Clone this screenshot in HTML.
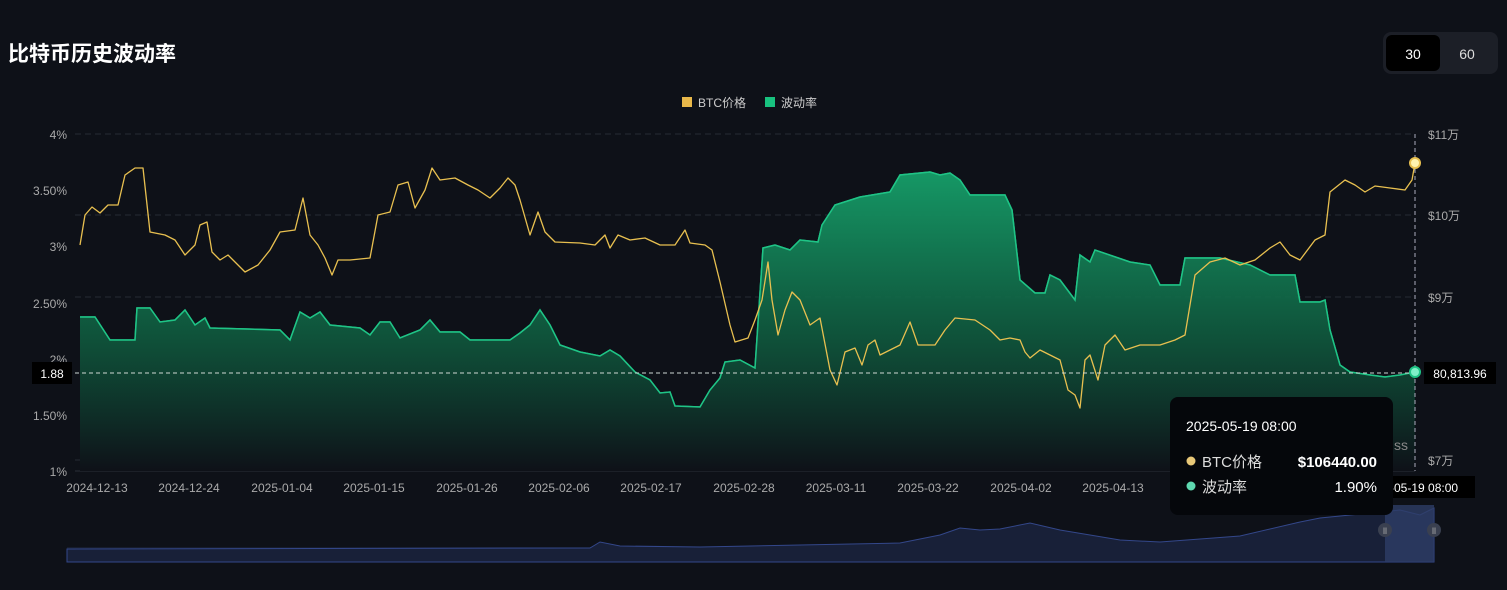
<!DOCTYPE html>
<html><head><meta charset="utf-8"><style>
body{margin:0;background:#0e1118;width:1507px;height:590px;overflow:hidden;font-family:"Liberation Sans","Noto Sans CJK SC",sans-serif;}
</style></head><body>
<svg width="1507" height="590" xmlns="http://www.w3.org/2000/svg" style="position:absolute;left:0;top:0;font-family:'Liberation Sans','Noto Sans CJK SC',sans-serif">
<defs>
<linearGradient id="g" x1="0" y1="0" x2="0" y2="1" gradientUnits="userSpaceOnUse" y1v="0">
</linearGradient>
<linearGradient id="gf" gradientUnits="userSpaceOnUse" x1="0" y1="170" x2="0" y2="471">
<stop offset="0" stop-color="#16a06a" stop-opacity="0.95"/>
<stop offset="0.55" stop-color="#0f5a3e" stop-opacity="0.9"/>
<stop offset="1" stop-color="#0e1118" stop-opacity="1"/>
</linearGradient>
<linearGradient id="nv" x1="0" y1="0" x2="0" y2="1">
<stop offset="0" stop-color="#2a3a6a"/><stop offset="1" stop-color="#151c30"/>
</linearGradient>
</defs>
<text x="8" y="61" fill="#fff" font-size="21" font-weight="bold">比特币历史波动率</text>
<rect x="1383" y="32" width="115" height="42" rx="8" fill="#1c1f27"/>
<rect x="1386" y="35" width="54" height="36" rx="6" fill="#000"/>
<text x="1413" y="59" fill="#fff" font-size="14" text-anchor="middle">30</text>
<text x="1467" y="59" fill="#ddd" font-size="14" text-anchor="middle">60</text>
<rect x="682" y="97" width="10" height="10" fill="#e8b84a"/>
<text x="698" y="107" fill="#ccc" font-size="12">BTC价格</text>
<rect x="765" y="97" width="10" height="10" fill="#18c27f"/>
<text x="781" y="107" fill="#ccc" font-size="12">波动率</text>
<g stroke="#262a33" stroke-dasharray="6 4" stroke-width="1">
<line x1="75" y1="134" x2="1415" y2="134"/><line x1="75" y1="215" x2="1415" y2="215"/>
<line x1="75" y1="297" x2="1415" y2="297"/><line x1="75" y1="460" x2="1415" y2="460"/>
</g>
<line x1="75" y1="471" x2="1415" y2="471" stroke="#2a2e38"/>
<g fill="#aaa" font-size="12" text-anchor="end">
<text x="67" y="139">4%</text><text x="67" y="195">3.50%</text><text x="67" y="251">3%</text>
<text x="67" y="308">2.50%</text><text x="67" y="364">2%</text><text x="67" y="420">1.50%</text><text x="67" y="476">1%</text>
</g>
<g fill="#aaa" font-size="12">
<text x="1428" y="139">$11万</text><text x="1428" y="220">$10万</text><text x="1428" y="302">$9万</text><text x="1428" y="465">$7万</text>
</g>
<g fill="#aaa" font-size="12" text-anchor="middle">
<text x="97" y="492">2024-12-13</text><text x="189" y="492">2024-12-24</text><text x="282" y="492">2025-01-04</text>
<text x="374" y="492">2025-01-15</text><text x="467" y="492">2025-01-26</text><text x="559" y="492">2025-02-06</text>
<text x="651" y="492">2025-02-17</text><text x="744" y="492">2025-02-28</text><text x="836" y="492">2025-03-11</text>
<text x="928" y="492">2025-03-22</text><text x="1021" y="492">2025-04-02</text><text x="1113" y="492">2025-04-13</text>
</g>
<path id="vol" d="M80,317 L95,317 L110,340 L135,340 L137,308 L150,308 L160,322 L175,320 L185,310 L195,325 L205,318 L210,328 L280,330 L290,340 L300,312 L310,318 L320,312 L330,325 L360,328 L370,335 L380,322 L390,322 L400,338 L420,330 L430,320 L440,332 L460,332 L470,340 L510,340 L520,333 L530,325 L540,310 L550,325 L560,345 L580,352 L600,356 L610,350 L620,356 L635,372 L650,380 L660,393 L670,392 L675,406 L700,407 L710,390 L720,378 L725,362 L740,360 L755,368 L763,248 L775,245 L790,250 L800,240 L818,242 L822,225 L835,205 L860,197 L890,192 L900,175 L930,172 L940,175 L950,173 L960,180 L970,195 L1005,195 L1012,210 L1020,280 L1035,293 L1045,293 L1050,275 L1060,280 L1075,300 L1080,255 L1090,262 L1095,250 L1130,262 L1150,265 L1160,285 L1180,285 L1185,258 L1220,258 L1250,265 L1270,275 L1295,275 L1300,302 L1320,302 L1325,300 L1330,330 L1340,365 L1350,372 L1370,375 L1385,377 L1400,375 L1415,372" fill="none" stroke="#1fc486" stroke-width="1.5"/>
<path d="M80,317 L95,317 L110,340 L135,340 L137,308 L150,308 L160,322 L175,320 L185,310 L195,325 L205,318 L210,328 L280,330 L290,340 L300,312 L310,318 L320,312 L330,325 L360,328 L370,335 L380,322 L390,322 L400,338 L420,330 L430,320 L440,332 L460,332 L470,340 L510,340 L520,333 L530,325 L540,310 L550,325 L560,345 L580,352 L600,356 L610,350 L620,356 L635,372 L650,380 L660,393 L670,392 L675,406 L700,407 L710,390 L720,378 L725,362 L740,360 L755,368 L763,248 L775,245 L790,250 L800,240 L818,242 L822,225 L835,205 L860,197 L890,192 L900,175 L930,172 L940,175 L950,173 L960,180 L970,195 L1005,195 L1012,210 L1020,280 L1035,293 L1045,293 L1050,275 L1060,280 L1075,300 L1080,255 L1090,262 L1095,250 L1130,262 L1150,265 L1160,285 L1180,285 L1185,258 L1220,258 L1250,265 L1270,275 L1295,275 L1300,302 L1320,302 L1325,300 L1330,330 L1340,365 L1350,372 L1370,375 L1385,377 L1400,375 L1415,372 L1415,471 L80,471 Z" fill="url(#gf)"/>
<use href="#vol"/>
<path d="M80,245 L85,215 L92,207 L100,213 L108,205 L118,205 L125,175 L135,168 L143,168 L150,232 L165,235 L175,240 L185,255 L195,245 L200,225 L207,222 L212,252 L220,260 L228,255 L235,262 L245,272 L258,265 L270,250 L280,232 L295,230 L303,198 L310,235 L318,245 L325,258 L332,275 L338,260 L350,260 L370,258 L378,215 L390,212 L398,185 L408,182 L415,208 L425,190 L432,168 L440,180 L455,178 L468,185 L478,190 L490,198 L500,188 L508,178 L515,185 L520,200 L530,235 L538,212 L545,232 L555,242 L580,243 L595,245 L605,235 L610,248 L618,235 L630,240 L645,238 L660,245 L675,245 L685,230 L690,243 L705,245 L712,250 L720,282 L730,325 L735,342 L748,338 L755,320 L762,300 L768,262 L772,300 L778,335 L785,310 L792,292 L800,300 L810,325 L820,318 L830,370 L837,385 L845,352 L855,348 L862,365 L868,345 L875,340 L880,355 L890,350 L900,345 L910,322 L918,345 L935,345 L945,330 L955,318 L975,320 L990,330 L1000,340 L1010,338 L1020,340 L1025,352 L1030,358 L1040,350 L1050,355 L1060,360 L1068,390 L1075,395 L1080,408 L1085,360 L1090,355 L1098,380 L1105,345 L1115,335 L1125,350 L1140,345 L1160,345 L1175,340 L1185,335 L1195,275 L1210,262 L1225,258 L1240,265 L1255,260 L1270,248 L1280,242 L1290,255 L1300,260 L1315,240 L1325,235 L1330,192 L1345,180 L1355,185 L1365,192 L1375,186 L1390,188 L1405,190 L1412,180 L1415,163" fill="none" stroke="#e8c050" stroke-width="1.3" stroke-linejoin="round"/>
<line x1="75" y1="373" x2="1415" y2="373" stroke="#cfd8d4" stroke-dasharray="4 3"/>
<line x1="1415" y1="134" x2="1415" y2="471" stroke="#aab" stroke-dasharray="4 3"/>
<rect x="32" y="362" width="40" height="22" fill="#000"/>
<text x="52" y="378" fill="#fff" font-size="12" text-anchor="middle">1.88</text>
<rect x="1424" y="362" width="72" height="22" fill="#000"/>
<text x="1460" y="378" fill="#fff" font-size="12" text-anchor="middle">80,813.96</text>
<circle cx="1415" cy="163" r="5" fill="#fff3b0" stroke="#e8c050" stroke-width="2"/>
<circle cx="1415" cy="372" r="5" fill="#7ff0c8" stroke="#1fc486" stroke-width="2"/>
<rect x="67" y="547" width="1367" height="15" fill="#161c2c"/>
<path d="M67,549 L590,548 L600,542 L620,546 L700,547 L800,545 L900,543 L940,535 L960,528 L980,530 L1000,529 L1030,523 L1060,530 L1090,535 L1120,540 L1160,542 L1240,536 L1300,522 L1320,518 L1400,510 L1420,515 L1434,508 L1434,562 L67,562 Z" fill="#182038" stroke="#33478a" stroke-width="1"/>
<rect x="1385" y="505" width="49" height="57" fill="#2e3d66" opacity="0.8"/>
<circle cx="1385" cy="530" r="7" fill="#3a4050"/><circle cx="1434" cy="530" r="7" fill="#3a4050"/>
<text x="1385" y="534" fill="#aaa" font-size="9" text-anchor="middle">ll</text>
<text x="1434" y="534" fill="#aaa" font-size="9" text-anchor="middle">ll</text>
<rect x="1385" y="476" width="90" height="22" fill="#000"/>
<text x="1390" y="492" fill="#fff" font-size="12">-05-19 08:00</text>
<text x="1408" y="450" fill="#888" font-size="14" text-anchor="end">ss</text>
<rect x="1170" y="397" width="223" height="118" rx="8" fill="#05070b"/>
<text x="1186" y="431" fill="#fff" font-size="14">2025-05-19 08:00</text>
<circle cx="1191" cy="461" r="4.5" fill="#e8c878"/>
<text x="1202" y="467" fill="#ddd" font-size="15">BTC价格</text>
<text x="1377" y="467" fill="#fff" font-size="15" font-weight="bold" text-anchor="end">$106440.00</text>
<circle cx="1191" cy="486" r="4.5" fill="#5ed8b0"/>
<text x="1202" y="492" fill="#ddd" font-size="15">波动率</text>
<text x="1377" y="492" fill="#fff" font-size="15" text-anchor="end">1.90%</text>
</svg>
</body></html>
